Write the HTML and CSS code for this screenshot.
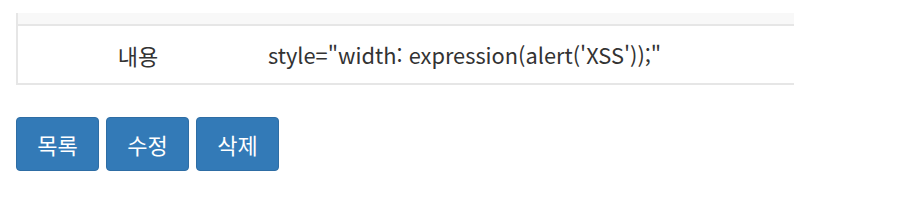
FILE: index.html
```html
<!DOCTYPE html>
<html lang="ko">
<head>
<meta charset="utf-8">
<link rel="stylesheet" href="styles.css">
</head>
<body>
<div class="page">
  <table class="view">
    <tbody>
      <tr class="prev"><th></th><td></td></tr>
      <tr class="row">
        <th>내용</th>
        <td>style="width: expression(alert('XSS'));"</td>
      </tr>
    </tbody>
  </table>
  <div class="actions">
    <button class="btn">목록</button>
    <button class="btn">수정</button>
    <button class="btn">삭제</button>
  </div>
</div>
</body>
</html>
```
FILE: styles.css
```css
html, body {
  margin: 0;
  padding: 0;
  background: #fff;
}
.page {
  padding: 13px 0 0 16px;
  font-family: "Noto Sans CJK KR", "Noto Sans", sans-serif;
  color: #333;
}
.view {
  width: 778px;
  border-collapse: collapse;
  border-left: 2px solid #e6e6e6;
  border-bottom: 2px solid #e6e6e6;
}
.view th, .view td {
  padding: 0;
}
.prev th, .prev td {
  height: 11px;
  background: #f8f8f8;
  border-bottom: 2px solid #e6e6e6;
}
.row th {
  width: 240px;
  height: 57px;
  font-weight: normal;
  font-size: 22px;
  text-align: center;
}
.row td {
  padding-left: 10px;
  font-size: 21.8px;
  text-align: left;
}
.actions {
  display: flex;
  gap: 7px;
  margin-top: 32px;
}
.btn {
  width: 83px;
  height: 54px;
  background: #337ab7;
  border: 1px solid #2e6da4;
  border-radius: 4px;
  color: #fff;
  font-family: "Noto Sans CJK KR", "Noto Sans", sans-serif;
  font-size: 22px;
  padding: 0;
}
```
